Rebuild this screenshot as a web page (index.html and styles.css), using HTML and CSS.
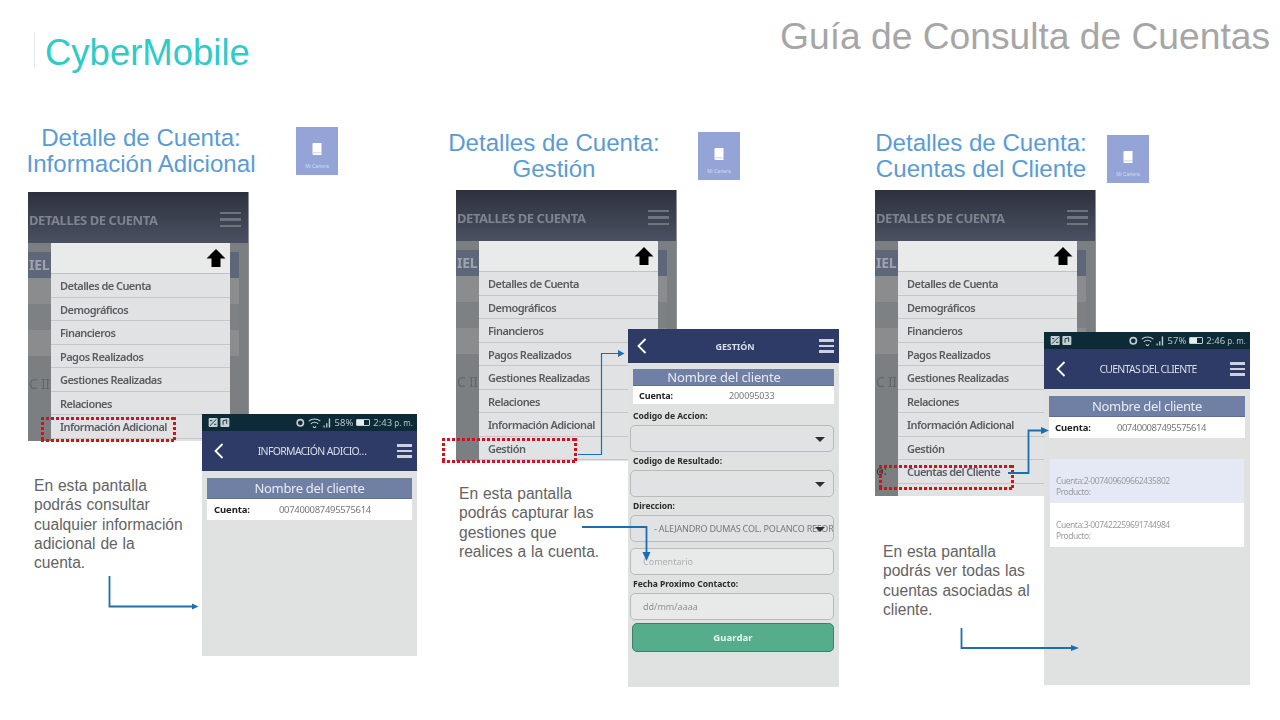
FILE: index.html
```html
<!DOCTYPE html>
<html lang="es">
<head>
<meta charset="utf-8">
<title>Guía de Consulta de Cuentas</title>
<link rel="stylesheet" href="styles.css">
</head>
<body>
<main class="slide">
  <h2 class="brand">CyberMobile</h2>
  <h1 class="guide">Guía de Consulta de Cuentas</h1>

  <h3 class="title t1">Detalle de Cuenta:<br>Información Adicional</h3>
  <h3 class="title t2">Detalles de Cuenta:<br>Gestión</h3>
  <h3 class="title t3">Detalles de Cuenta:<br>Cuentas del Cliente</h3>

  <div class="tile tile1"><svg class="book" viewBox="0 0 10 12"><path d="M1.500 0H9.500V12H1.500A1.200 1.200 0 0 1 .5 11V1A1.200 1.200 0 0 1 1.500 0Z" fill="#fff"/><path d="M1 9.600H9.500V10.200H1Z" fill="#aab6de"/></svg><span>Mi Cartera</span></div>
  <div class="tile tile2"><svg class="book" viewBox="0 0 10 12"><path d="M1.500 0H9.500V12H1.500A1.200 1.200 0 0 1 .5 11V1A1.200 1.200 0 0 1 1.500 0Z" fill="#fff"/><path d="M1 9.600H9.500V10.200H1Z" fill="#aab6de"/></svg><span>Mi Cartera</span></div>
  <div class="tile tile3"><svg class="book" viewBox="0 0 10 12"><path d="M1.500 0H9.500V12H1.500A1.200 1.200 0 0 1 .5 11V1A1.200 1.200 0 0 1 1.500 0Z" fill="#fff"/><path d="M1 9.600H9.500V10.200H1Z" fill="#aab6de"/></svg><span>Mi Cartera</span></div>

  <!-- Screens behind: menu -->
  <section class="back b1">
    <div class="back-head"><span>DETALLES DE CUENTA</span><i class="burger dim"><b></b><b></b><b></b></i></div>
    <div class="back-body">
      <div class="strip name">IEL</div><div class="strip a"></div><div class="strip b"></div><div class="strip a"></div><div class="strip c">C II S</div>
    </div>
    <nav class="menu">
      <div class="menu-top"><svg class="up" viewBox="0 0 20 20"><path d="M10 1 19.500 10.500H14.500V19H5.500V10.500H.5Z"/></svg></div>
      <a>Detalles de Cuenta</a><a>Demográficos</a><a>Financieros</a><a>Pagos Realizados</a><a>Gestiones Realizadas</a><a>Relaciones</a><a>Información Adicional</a>
    </nav>
  </section>
  <section class="back b2">
    <div class="back-head"><span>DETALLES DE CUENTA</span><i class="burger dim"><b></b><b></b><b></b></i></div>
    <div class="back-body">
      <div class="strip name">IEL</div><div class="strip a"></div><div class="strip b"></div><div class="strip a"></div><div class="strip c">C II S</div>
    </div>
    <nav class="menu">
      <div class="menu-top"><svg class="up" viewBox="0 0 20 20"><path d="M10 1 19.500 10.500H14.500V19H5.500V10.500H.5Z"/></svg></div>
      <a>Detalles de Cuenta</a><a>Demográficos</a><a>Financieros</a><a>Pagos Realizados</a><a>Gestiones Realizadas</a><a>Relaciones</a><a>Información Adicional</a><a>Gestión</a>
    </nav>
  </section>
  <section class="back b3">
    <div class="back-head"><span>DETALLES DE CUENTA</span><i class="burger dim"><b></b><b></b><b></b></i></div>
    <div class="back-body">
      <div class="strip name">IEL</div><div class="strip a"></div><div class="strip b"></div><div class="strip a"></div><div class="strip c">C II S</div><div class="strip d">o:</div>
    </div>
    <nav class="menu">
      <div class="menu-top"><svg class="up" viewBox="0 0 20 20"><path d="M10 1 19.500 10.500H14.500V19H5.500V10.500H.5Z"/></svg></div>
      <a>Detalles de Cuenta</a><a>Demográficos</a><a>Financieros</a><a>Pagos Realizados</a><a>Gestiones Realizadas</a><a>Relaciones</a><a>Información Adicional</a><a>Gestión</a><a>Cuentas del Cliente</a>
    </nav>
  </section>

  <!-- Screens in front -->
  <section class="phone p1">
    <div class="status">
      <svg class="st-left" viewBox="0 0 23 10"><rect width="10" height="10" rx="1" fill="#c3cfd2"/><path d="M1.500 8.500 8.500 1.500M1.500 3H4M6 7H8.500" stroke="#0e2b37" fill="none"/><rect x="13" width="10" height="10" rx="1" fill="#c3cfd2"/><path d="M16 7.500V3L20 2V6.500" stroke="#0e2b37" fill="none"/></svg>
      <span class="st-right"><svg class="st-icons" viewBox="0 0 34 11"><circle cx="4" cy="5.500" r="3" fill="none" stroke="#c3cfd2" stroke-width="1.500"/><path d="M12 4A8 8 0 0 1 23 4M14 6.500A5 5 0 0 1 21 6.500M16 9 17.500 10.500 19 9" fill="none" stroke="#c3cfd2"/><path d="M26 8h1.200v2H26ZM28.500 6h1.200v4h-1.200ZM31 1.500h1.300V10H31Z" fill="#c3cfd2"/></svg>58%<i class="batt"><b class="w58"></b></i>2:43 <small>p. m.</small></span>
    </div>
    <header class="head"><svg class="chev" viewBox="0 0 10 16"><path d="M8.500 1 1.500 8 8.500 15" fill="none" stroke="#fff" stroke-width="1.800"/></svg><span class="ht1">INFORMACIÓN ADICIO…</span><i class="burger"><b></b><b></b><b></b></i></header>
    <div class="pad">
      <div class="client">Nombre del cliente</div>
      <div class="acct"><strong>Cuenta:</strong><span>007400087495575614</span></div>
    </div>
  </section>

  <section class="phone p2">
    <header class="head short"><svg class="chev" viewBox="0 0 10 16"><path d="M8.500 1 1.500 8 8.500 15" fill="none" stroke="#fff" stroke-width="1.800"/></svg><strong>GESTIÓN</strong><i class="burger"><b></b><b></b><b></b></i></header>
    <div class="pad2">
      <div class="client small">Nombre del cliente</div>
      <div class="acct small"><strong>Cuenta:</strong><span>200095033</span></div>
    </div>
    <form class="form">
      <label>Codigo de Accion:</label>
      <div class="field select"></div>
      <label>Codigo de Resultado:</label>
      <div class="field select"></div>
      <label>Direccion:</label>
      <div class="field select addr">- ALEJANDRO DUMAS COL. POLANCO REFOR</div>
      <div class="field light faint">Comentario</div>
      <label>Fecha Proximo Contacto:</label>
      <div class="field light">dd/mm/aaaa</div>
      <div class="save">Guardar</div>
    </form>
  </section>

  <section class="phone p3">
    <div class="status">
      <svg class="st-left" viewBox="0 0 23 10"><rect width="10" height="10" rx="1" fill="#c3cfd2"/><path d="M1.500 8.500 8.500 1.500M1.500 3H4M6 7H8.500" stroke="#0e2b37" fill="none"/><rect x="13" width="10" height="10" rx="1" fill="#c3cfd2"/><path d="M16 7.500V3L20 2V6.500" stroke="#0e2b37" fill="none"/></svg>
      <span class="st-right"><svg class="st-icons" viewBox="0 0 34 11"><circle cx="4" cy="5.500" r="3" fill="none" stroke="#c3cfd2" stroke-width="1.500"/><path d="M12 4A8 8 0 0 1 23 4M14 6.500A5 5 0 0 1 21 6.500M16 9 17.500 10.500 19 9" fill="none" stroke="#c3cfd2"/><path d="M26 8h1.200v2H26ZM28.500 6h1.200v4h-1.200ZM31 1.500h1.300V10H31Z" fill="#c3cfd2"/></svg>57%<i class="batt"><b class="w57"></b></i>2:46 <small>p. m.</small></span>
    </div>
    <header class="head"><svg class="chev" viewBox="0 0 10 16"><path d="M8.500 1 1.500 8 8.500 15" fill="none" stroke="#fff" stroke-width="1.800"/></svg><span class="ht3">CUENTAS DEL CLIENTE</span><i class="burger"><b></b><b></b><b></b></i></header>
    <div class="pad">
      <div class="client">Nombre del cliente</div>
      <div class="acct tight"><strong>Cuenta:</strong><span>007400087495575614</span></div>
      <ul class="list">
        <li class="sel">Cuenta:2-007409609662435802<br>Producto:</li>
        <li>Cuenta:3-007422259691744984<br>Producto:</li>
      </ul>
    </div>
  </section>

  <p class="note n1">En esta pantalla<br>podrás consultar<br>cualquier información<br>adicional de la<br>cuenta.</p>
  <p class="note n2">En esta pantalla<br>podrás capturar las<br>gestiones que<br>realices a la cuenta.</p>
  <p class="note n3">En esta pantalla<br>podrás ver todas las<br>cuentas asociadas al<br>cliente.</p>

  <div class="mark m1"></div>
  <div class="mark m2"></div>
  <div class="mark m3"></div>

  <svg class="arrows" viewBox="0 0 1280 720">
    <path class="ln" d="M109.500 576V606.500H192"/><path class="hd" d="M192 603.500 198.500 606.500 192 609.500Z"/>
    <path class="ln thin" d="M578 454.500H601.500V353.500H618"/><path class="hd" d="M618 350 624.500 353.500 618 357Z"/>
    <path class="ln" d="M582 527H646.500V552"/><path class="hd" d="M642.500 552H650.500L646.500 561Z"/>
    <path class="ln" d="M1008 473H1028.500V430.500H1041"/><path class="hd" d="M1041 427 1049 430.500 1041 434Z"/>
    <path class="ln" d="M961.500 628V648H1071"/><path class="hd" d="M1071 645 1079 648 1071 651Z"/>
  </svg>
</main>
</body>
</html>
```
FILE: styles.css
```css
* { box-sizing: border-box; }
html, body { margin: 0; padding: 0; background: #fff; }
.slide { position: relative; width: 1280px; height: 720px; overflow: hidden; font-family: "Liberation Sans", Arial, sans-serif; }

.brand { position: absolute; left: 34px; top: 32px; height: 36px; margin: 0; padding-left: 10px; border-left: 1px solid #e4eaec; font-size: 36.500px; line-height: 42px; font-weight: 400; color: #2fcbc8; white-space: nowrap; }
.guide { position: absolute; right: 10px; top: 15px; margin: 0; font-size: 37.200px; line-height: 42px; font-weight: 400; color: #a6a6a6; white-space: nowrap; }

.title { position: absolute; width: 300px; margin: 0; font-size: 24.100px; line-height: 26px; font-weight: 400; color: #5b9bd5; text-align: center; }
.t1 { left: -9px; top: 125px; }
.t2 { left: 404px; top: 130px; }
.t3 { left: 831px; top: 130px; }

.tile { position: absolute; width: 42px; height: 48px; background: #95a4d7; display: flex; flex-direction: column; align-items: center; padding-top: 16px; color: #d3daf0; font-size: 5px; line-height: 6px; }
.tile span { margin-top: 8px; white-space: nowrap; }
.book { width: 10px; height: 12px; display: block; }
.tile1 { left: 296px; top: 127px; }
.tile2 { left: 698px; top: 132px; }
.tile3 { left: 1107px; top: 135px; }

.back { position: absolute; width: 221px; overflow: hidden; background: #7b7f82; font-family: "Noto Sans", sans-serif; border-right: 1px solid #8d9296; filter: blur(.3px); }
.b1 { left: 28px; top: 192px; height: 249px; }
.b2 { left: 456px; top: 190px; height: 271px; }
.b3 { left: 875px; top: 190px; height: 306px; }
.back-head { height: 51px; display: flex; align-items: center; justify-content: space-between; padding: 4px 7px 0 1px; background: linear-gradient(#2d313e, #4b5162); color: #7f838d; font-size: 13px; font-weight: 700; letter-spacing: -.45px; white-space: nowrap; }
.back-body { padding: 9px 9px 0 0; }
.strip { height: 26px; font-size: 14px; font-weight: 700; letter-spacing: -.3px; }
.strip.name { background: #5e667a; color: #9ea3ae; line-height: 26px; padding-left: 1px; }
.strip.a { background: #8a8c8e; }
.strip.b { background: #7d8184; }
.strip.c { margin-top: 18px; color: #63676a; font-weight: 400; padding-left: 1px; }
.strip.d { margin-top: 63px; color: #3a3d40; font-size: 13px; font-weight: 400; padding-left: 1px; }

.menu { position: absolute; left: 23px; top: 51px; bottom: 0; width: 179px; background: #e0e2e3; border-radius: 4px 4px 0 0; }
.menu-top { height: 31px; background: #e9ebea; border-bottom: 1px solid #bfc3c3; display: flex; justify-content: flex-end; align-items: center; padding: 0 4px 1px 0; }
.up { width: 20px; height: 20px; display: block; }
.menu a { display: block; height: 23.500px; line-height: 23px; padding-left: 9px; border-bottom: 1px solid #c4c7c7; color: #5a5d60; font-size: 11px; font-weight: 600; letter-spacing: -.55px; white-space: nowrap; }

.phone { position: absolute; background: #dfe2e1; font-family: "Noto Sans", sans-serif; overflow: hidden; filter: blur(.3px); }
.p1 { left: 202px; top: 414px; width: 215px; height: 242px; }
.p2 { left: 628px; top: 329px; width: 211px; height: 358px; }
.p3 { left: 1044px; top: 332px; width: 206px; height: 353px; }

.status { height: 17px; background: #0d2a37; display: flex; align-items: center; justify-content: space-between; padding: 0 4px 0 6px; color: #b8c6ca; font-size: 9.500px; }
.st-left { width: 22px; height: 9px; display: block; }
.st-right { display: flex; align-items: center; white-space: nowrap; }
.st-right small { font-size: 8px; margin-left: 2px; }
.st-icons { width: 36px; height: 11.600px; margin-right: 3px; display: block; }
.batt { display: block; width: 14px; height: 7px; margin: 0 3px; border: 1px solid #c3cfd2; border-radius: 1px; }
.batt b { display: block; height: 100%; background: #e8eeee; }
.w58 { width: 58%; }
.w57 { width: 57%; }

.head { height: 40px; background: #2e3b66; display: flex; align-items: center; justify-content: space-between; padding: 0 5px 0 12px; color: #d9dde8; font-size: 10.500px; white-space: nowrap; }
.head.short { height: 34px; padding-left: 9px; }
.head.short strong { font-size: 9px; color: #d9dde8; letter-spacing: -.1px; margin-left: 4px; }
.ht1 { letter-spacing: -.65px; margin-left: 3px; }
.ht3 { letter-spacing: -.75px; }
.chev { width: 10px; height: 16px; display: block; }

.burger { display: flex; flex-direction: column; gap: 3px; width: 15px; }
.burger b { display: block; height: 2.500px; background: #cdd2de; }
.burger.dim { width: 21px; gap: 4px; }
.burger.dim b { background: #6e737e; }

.pad { padding: 7px 5px 0; }
.pad2 { padding: 6px 5px 0; }
.client { height: 21px; background: #6f80a4; box-shadow: inset 0 -1px #5f7096; color: #e8ebf3; font-size: 13px; letter-spacing: -.35px; line-height: 21px; text-align: center; }
.client.small { height: 17px; line-height: 17px; padding-right: 19px; letter-spacing: -.15px; }
.acct { height: 21px; background: #fff; display: flex; align-items: center; padding-left: 7px; font-size: 9.500px; color: #777; letter-spacing: -.33px; }
.acct strong { width: 65px; color: #222; font-size: 9.500px; letter-spacing: -.1px; flex: none; }
.acct.tight { letter-spacing: -.5px; padding-left: 6px; }
.acct.tight strong { width: 62px; }
.acct.small { height: 18px; padding-left: 6px; font-size: 9px; letter-spacing: -.1px; }
.acct.small strong { font-size: 9px; width: 90px; }

.list { list-style: none; margin: 21px 1px 0; padding: 0; }
.list li { height: 44px; padding-top: 16px; background: #fff; color: #9a9c9e; font-size: 8.500px; line-height: 11px; letter-spacing: -.45px; padding-left: 6px; }
.list li.sel { background: #e4e9f5; }

.form { display: flex; flex-direction: column; padding: 5px 5px 0 2px; }
.form label { height: 16px; line-height: 14px; padding-left: 3px; font-size: 8.500px; font-weight: 700; color: #2a2a2a; }
.field { height: 27px; margin-bottom: 2px; background: #e0e2e3; border: 1px solid #b7bbbb; border-radius: 5px; font-size: 9px; line-height: 25px; color: #858789; padding-left: 12px; position: relative; white-space: nowrap; overflow: hidden; }
.field.light { background: #e8eaea; color: #8e9092; }
.field.faint { margin-top: 4px; color: #adb0b1; }
.field.addr { padding-left: 23px; letter-spacing: -.2px; color: #777; }
.field.select::after { content: ""; position: absolute; right: 8px; top: 11px; border: 5px solid transparent; border-top: 5px solid #2c2f33; border-bottom: 0; }
.save { height: 29px; margin: 1px 0 0 2px; background: #55ad8b; border: 1px solid #3f7f6a; border-radius: 5px; color: #e8f4ef; font-size: 9.500px; font-weight: 700; line-height: 27px; text-align: center; letter-spacing: .1px; }

.note { position: absolute; margin: 0; font-size: 15.600px; word-spacing: .5px; line-height: 19.300px; color: #636363; white-space: nowrap; }
.n1 { left: 34px; top: 476px; }
.n2 { left: 459px; top: 484px; }
.n3 { left: 883px; top: 542px; }

.mark { position: absolute; width: 135px; height: 25px; background-color: transparent; background-repeat: no-repeat; background-image: repeating-linear-gradient(90deg, #d3111a 0 3px, transparent 3px 5px), repeating-linear-gradient(90deg, #d3111a 0 3px, transparent 3px 5px), repeating-linear-gradient(180deg, #d3111a 0 3px, transparent 3px 5px), repeating-linear-gradient(180deg, #d3111a 0 3px, transparent 3px 5px); background-size: 100% 3px, 100% 3px, 3px 100%, 3px 100%; background-position: 0 0, 0 100%, 0 0, 100% 0; }
.m1 { left: 41px; top: 417px; }
.m2 { left: 442px; top: 438px; }
.m3 { left: 879px; top: 465px; }

.arrows { position: absolute; left: 0; top: 0; width: 1280px; height: 720px; pointer-events: none; }
.ln { fill: none; stroke: #1b6fb0; stroke-width: 1.800; }
.ln.thin { stroke-width: 1.200; }
.hd { fill: #1b6fb0; }
```
